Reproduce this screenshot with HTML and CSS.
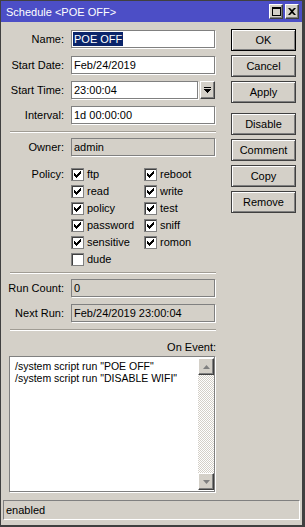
FILE: index.html
```html
<!DOCTYPE html>
<html lang="en">
<head>
    <meta charset="UTF-8">
    <title>Schedule &lt;POE OFF&gt;</title>
    <link rel="stylesheet" href="styles.css">
</head>
<body>
    <div class="window">
        <div class="titlebar">
            <span class="title">Schedule &lt;POE OFF&gt;</span>
            <div class="title-buttons">
                <span class="tbtn">
                    <svg width="9" height="9" viewBox="0 0 9 9"><path d="M0 0h9v9h-9z M1 2v6h7v-6z" fill="#000" fill-rule="evenodd" shape-rendering="crispEdges"/></svg>
                </span>
                <span class="tbtn">
                    <svg width="8" height="7" viewBox="0 0 8 7"><path d="M0 0h2l2 2 2-2h2l-3 3.5 3 3.5h-2l-2-2-2 2h-2l3-3.5z" fill="#000"/></svg>
                </span>
            </div>
        </div>

        <div class="main">
            <div class="form">
                <div class="row">
                    <label>Name:</label>
                    <div class="field"><span class="selected">POE OFF</span></div>
                </div>
                <div class="row">
                    <label>Start Date:</label>
                    <div class="field">Feb/24/2019</div>
                </div>
                <div class="row">
                    <label>Start Time:</label>
                    <div class="field short">23:00:04</div>
                    <span class="drop">
                        <svg width="7" height="7" viewBox="0 0 7 7"><path d="M0 0h7v1h-7z M0 2h7l-3.5 4z" fill="#000" shape-rendering="crispEdges"/></svg>
                    </span>
                </div>
                <div class="row">
                    <label>Interval:</label>
                    <div class="field">1d 00:00:00</div>
                </div>

                <div class="sep first-sep"></div>

                <div class="row owner">
                    <label>Owner:</label>
                    <div class="field disabled">admin</div>
                </div>

                <div class="policy">
                    <label>Policy:</label>
                    <div class="checks">
                        <div class="check on"><i></i>ftp</div>
                        <div class="check on"><i></i>reboot</div>
                        <div class="check on"><i></i>read</div>
                        <div class="check on"><i></i>write</div>
                        <div class="check on"><i></i>policy</div>
                        <div class="check on"><i></i>test</div>
                        <div class="check on"><i></i>password</div>
                        <div class="check on"><i></i>sniff</div>
                        <div class="check on"><i></i>sensitive</div>
                        <div class="check on"><i></i>romon</div>
                        <div class="check"><i></i>dude</div>
                    </div>
                </div>

                <div class="sep"></div>

                <div class="row runs">
                    <label>Run Count:</label>
                    <div class="field disabled">0</div>
                </div>
                <div class="row">
                    <label>Next Run:</label>
                    <div class="field disabled">Feb/24/2019 23:00:04</div>
                </div>

                <div class="sep last-sep"></div>

                <div class="event-label">On Event:</div>
                <div class="event">
                    <div class="event-text">/system script run "POE OFF"<br>/system script run "DISABLE WIFI"</div>
                    <div class="scrollbar">
                        <span class="arrow">
                            <svg width="7" height="4" viewBox="0 0 7 4"><path d="M3.5 0l3.5 4h-7z" fill="#808080"/></svg>
                        </span>
                        <span class="track"></span>
                        <span class="arrow">
                            <svg width="7" height="4" viewBox="0 0 7 4"><path d="M0 0h7l-3.5 4z" fill="#808080"/></svg>
                        </span>
                    </div>
                </div>
            </div>

            <div class="actions">
                <button class="default">OK</button>
                <button>Cancel</button>
                <button>Apply</button>
                <button class="group">Disable</button>
                <button>Comment</button>
                <button>Copy</button>
                <button>Remove</button>
            </div>
        </div>

        <div class="statusbar">enabled</div>
    </div>
</body>
</html>
```

FILE: styles.css
```css
* {
    margin: 0;
    padding: 0;
    box-sizing: border-box;
}

body {
    margin: 0;
    background: #d4d0c8;
    font-family: "Liberation Sans", Arial, sans-serif;
    font-size: 11px;
    color: #000;
}

.window {
    width: 305px;
    height: 527px;
    background: #d4d0c8;
    border: 1px solid #404040;
    border-right: 3px solid #404040;
    border-bottom: 2px solid #404040;
}

.titlebar {
    height: 21px;
    background: #4c4ec6;
    display: flex;
    align-items: center;
    justify-content: space-between;
    padding: 0 3px 0 5px;
}

.title {
    color: #fff;
    font-size: 11px;
}

.title-buttons {
    display: flex;
    gap: 2px;
}

.tbtn {
    width: 14px;
    height: 15px;
    background: #d4d0c8;
    border: 1px solid;
    border-color: #fff #404040 #404040 #fff;
    box-shadow: inset -1px -1px #808080;
    display: flex;
    align-items: center;
    justify-content: center;
}

.main {
    display: flex;
}

.form {
    width: 222px;
    padding-top: 8px;
}

.row {
    display: flex;
    align-items: center;
    height: 18px;
    margin-bottom: 7px;
}

.row:first-child {
    margin-bottom: 8px;
}

.row label,
.policy label {
    width: 63px;
    text-align: right;
    margin-right: 7px;
}

.field {
    width: 144px;
    height: 18px;
    background: #fff;
    border: 1px solid #808080;
    box-shadow: 1px 1px 0 #fff;
    padding-left: 2px;
    line-height: 16px;
    white-space: nowrap;
}

.field.short {
    width: 127px;
}

.field.disabled {
    background: #d4d0c8;
}

.selected {
    display: inline-block;
    background: #0a246a;
    color: #fff;
    line-height: 14px;
    padding: 0 1px;
    margin-left: -1px;
}

.drop {
    width: 15px;
    height: 18px;
    margin-left: 2px;
    border: 1px solid;
    border-color: #fff #404040 #404040 #fff;
    box-shadow: inset -1px -1px #808080;
    display: flex;
    align-items: center;
    justify-content: center;
}

.sep {
    margin-left: 9px;
    width: 206px;
    height: 2px;
    border-top: 1px solid #a09c94;
    border-bottom: 1px solid #fff;
}

.first-sep {
    margin-top: 1px;
}

.last-sep {
    margin-top: 2px;
}

.owner {
    margin-top: 5px;
}

.policy {
    display: flex;
    margin-top: -7px;
    margin-bottom: 2px;
    padding-top: 12px;
}

.policy label {
    line-height: 13px;
}

.checks {
    display: grid;
    grid-template-columns: 73px 70px;
    grid-auto-rows: 17px;
}

.check {
    display: flex;
    align-items: flex-start;
    line-height: 13px;
}

.check i {
    width: 13px;
    height: 13px;
    margin-right: 3px;
    background: #fff;
    border: 1px solid #808080;
    box-shadow: inset 1px 1px #404040;
    flex-shrink: 0;
}

.check.on i {
    background: #fff url("data:image/svg+xml,%3Csvg xmlns='http://www.w3.org/2000/svg' width='7' height='7' shape-rendering='crispEdges'%3E%3Cpath d='M6 0h1v1h-1z M5 1h2v1h-2z M0 2h1v1h-1z M4 2h3v1h-3z M0 3h2v1h-2z M3 3h3v1h-3z M0 4h5v1h-5z M1 5h3v1h-3z M2 6h1v1h-1z' fill='%23000'/%3E%3C/svg%3E") no-repeat 2px 2px;
}

.runs {
    margin-top: 5px;
}

.event-label {
    margin-top: 10px;
    width: 215px;
    text-align: right;
    line-height: 13px;
}

.event {
    margin: 2px 0 0 8px;
    width: 206px;
    height: 136px;
    background: #fff;
    border: 1px solid #808080;
    box-shadow: 1px 1px 0 #fff;
    display: flex;
}

.event-text {
    flex: 1;
    padding: 3px 0 0 5px;
    line-height: 12px;
    white-space: nowrap;
    font-size: 10.5px;
}

.scrollbar {
    width: 16px;
    display: flex;
    flex-direction: column;
    padding: 1px 0;
}

.arrow {
    height: 17px;
    background: #d4d0c8;
    border: 1px solid;
    border-color: #fff #404040 #404040 #fff;
    box-shadow: inset -1px -1px #808080;
    display: flex;
    align-items: center;
    justify-content: center;
}

.track {
    flex: 1;
    background: repeating-conic-gradient(#d4d0c8 0 25%, #fff 0 50%) 0 0 / 2px 2px;
}

.actions {
    width: 65px;
    margin-left: 8px;
    padding-top: 7px;
    display: flex;
    flex-direction: column;
    gap: 4px;
}

button {
    height: 22px;
    font-family: "Liberation Sans", Arial, sans-serif;
    font-size: 11px;
    color: #000;
    background: #d4d0c8;
    border: 1px solid #404040;
    box-shadow: inset 1px 1px #fff, inset -1px -1px #808080;
}

button.default {
    border-color: #000;
}

button.group {
    margin-top: 6px;
}

.statusbar {
    margin: 8px 0 0 2px;
    width: 297px;
    height: 20px;
    border: 1px solid;
    border-color: #808080 #fff #fff #808080;
    padding-left: 2px;
    line-height: 18px;
}
```
